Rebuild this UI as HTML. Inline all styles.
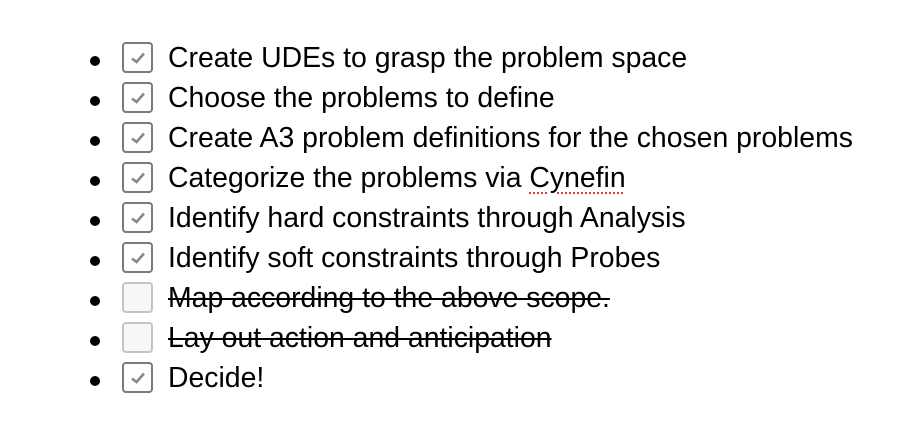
<!DOCTYPE html>
<html><head><style>
body{margin:0;width:904px;height:444px;background:#fff;font-family:"Liberation Sans",Arial,sans-serif;color:#000;}
.row{position:absolute;left:0;height:40px;width:904px;}
.b{position:absolute;left:90px;top:16px;width:10px;height:10px;border-radius:50%;background:#000;}
.cb{position:absolute;left:122px;top:2px;width:31px;height:31px;border:2px solid #7a7a7a;border-radius:4px;box-sizing:border-box;background:#fff;}
.cb.u{border-color:#c4c4c4;background:#f8f8f8;}
.cb svg{position:absolute;left:6px;top:7px;}
.t{position:absolute;left:168px;top:1px;font-size:28.4px;line-height:34px;white-space:nowrap;}
.s{text-decoration:line-through;text-decoration-thickness:2px;}
.sq{text-decoration:underline dotted #e04040;text-decoration-thickness:2px;text-underline-offset:5px;}
</style></head><body>
<div class="row" style="top:40px"><div class="b"></div><div class="cb"><svg width="16" height="14" viewBox="0 0 16 14"><path d="M2 7.5 L6.5 11 L14 2.5" fill="none" stroke="#888" stroke-width="2.6"/></svg></div><div class="t">Create UDEs to grasp the problem space</div></div>
<div class="row" style="top:80px"><div class="b"></div><div class="cb"><svg width="16" height="14" viewBox="0 0 16 14"><path d="M2 7.5 L6.5 11 L14 2.5" fill="none" stroke="#888" stroke-width="2.6"/></svg></div><div class="t">Choose the problems to define</div></div>
<div class="row" style="top:120px"><div class="b"></div><div class="cb"><svg width="16" height="14" viewBox="0 0 16 14"><path d="M2 7.5 L6.5 11 L14 2.5" fill="none" stroke="#888" stroke-width="2.6"/></svg></div><div class="t">Create A3 problem definitions for the chosen problems</div></div>
<div class="row" style="top:160px"><div class="b"></div><div class="cb"><svg width="16" height="14" viewBox="0 0 16 14"><path d="M2 7.5 L6.5 11 L14 2.5" fill="none" stroke="#888" stroke-width="2.6"/></svg></div><div class="t">Categorize the problems via <span class="sq">Cynefin</span></div></div>
<div class="row" style="top:200px"><div class="b"></div><div class="cb"><svg width="16" height="14" viewBox="0 0 16 14"><path d="M2 7.5 L6.5 11 L14 2.5" fill="none" stroke="#888" stroke-width="2.6"/></svg></div><div class="t">Identify hard constraints through Analysis</div></div>
<div class="row" style="top:240px"><div class="b"></div><div class="cb"><svg width="16" height="14" viewBox="0 0 16 14"><path d="M2 7.5 L6.5 11 L14 2.5" fill="none" stroke="#888" stroke-width="2.6"/></svg></div><div class="t">Identify soft constraints through Probes</div></div>
<div class="row" style="top:280px"><div class="b"></div><div class="cb u"></div><div class="t s">Map according to the above scope.</div></div>
<div class="row" style="top:320px"><div class="b"></div><div class="cb u"></div><div class="t s">Lay out action and anticipation</div></div>
<div class="row" style="top:360px"><div class="b"></div><div class="cb"><svg width="16" height="14" viewBox="0 0 16 14"><path d="M2 7.5 L6.5 11 L14 2.5" fill="none" stroke="#888" stroke-width="2.6"/></svg></div><div class="t">Decide!</div></div>
</body></html>
